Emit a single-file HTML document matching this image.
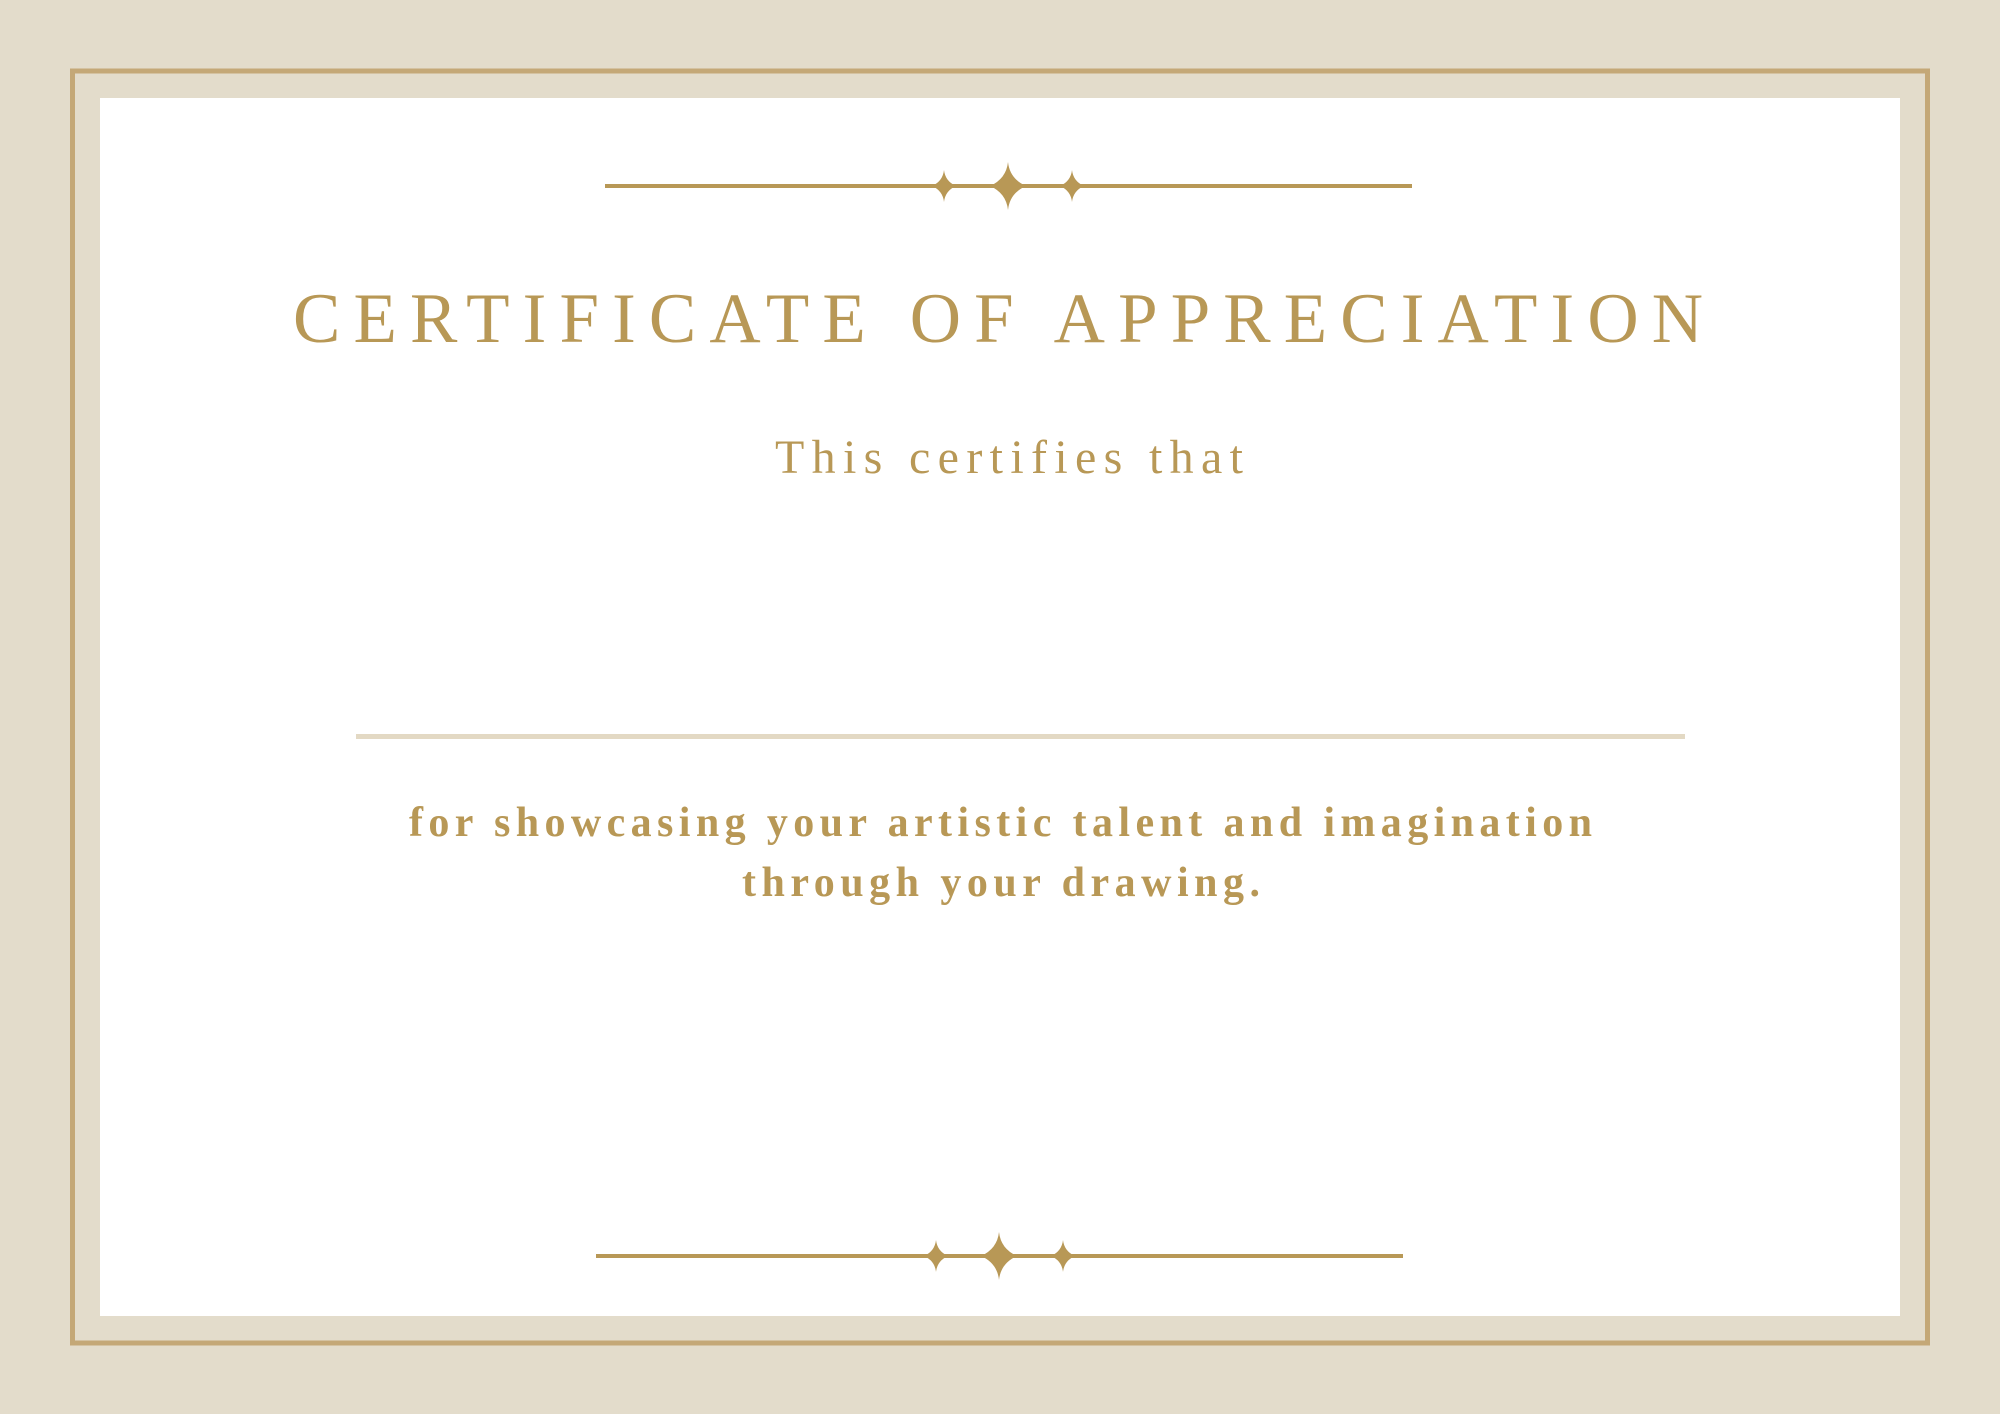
<!DOCTYPE html>
<html><head><meta charset="utf-8"><style>
html,body{margin:0;padding:0;background:#e3dccb;}
svg{display:block}
</style></head><body>
<svg width="2000" height="1414" viewBox="0 0 2000 1414" xmlns="http://www.w3.org/2000/svg">
<rect width="2000" height="1414" fill="#e3dccb"/>
<rect x="72.5" y="71" width="1855" height="1272" fill="none" stroke="#c4a877" stroke-width="5"/>
<rect x="100" y="98" width="1800" height="1218" fill="#ffffff"/>
<defs>
<path id="st" d="M0,-1 Q0.1,-0.3 1,0 Q0.1,0.3 0,1 Q-0.1,0.3 -1,0 Q-0.1,-0.3 0,-1Z"/>
</defs>
<g fill="#b89856">
<rect x="605" y="184" width="807" height="4"/>
<use href="#st" transform="translate(944,186) scale(12,16)"/>
<use href="#st" transform="translate(1008,186) scale(18,24)"/>
<use href="#st" transform="translate(1072,186) scale(12,16)"/>
<rect x="596" y="1254" width="807" height="4"/>
<use href="#st" transform="translate(936,1256) scale(12,16)"/>
<use href="#st" transform="translate(999,1256) scale(18,24)"/>
<use href="#st" transform="translate(1063,1256) scale(12,16)"/>
</g>
<rect x="356" y="734" width="1329" height="5" fill="#e3d9c4"/>
<g fill="#b89856" font-family="'Liberation Serif', serif">
<text x="293" y="342" font-size="71" textLength="1410" lengthAdjust="spacing">CERTIFICATE OF APPRECIATION</text>
<text x="775" y="473" font-size="48" textLength="468" lengthAdjust="spacing">This certifies that</text>
<text x="409" y="836" font-size="42" font-weight="bold" textLength="1183" lengthAdjust="spacing">for showcasing your artistic talent and imagination</text>
<text x="742" y="896" font-size="42" font-weight="bold" textLength="518" lengthAdjust="spacing">through your drawing.</text>
</g>
</svg>
</body></html>
